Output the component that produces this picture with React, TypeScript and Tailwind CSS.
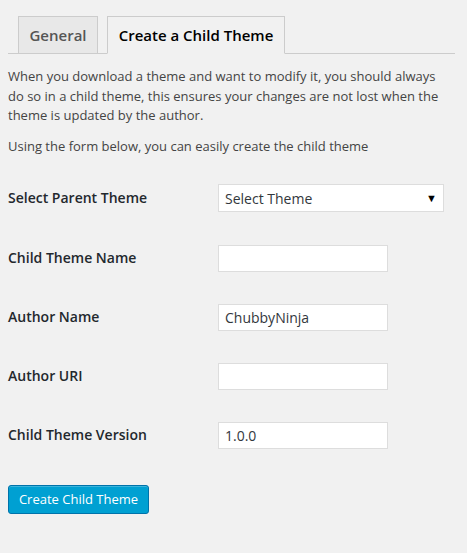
export default function App() {
  const rows = [
    { label: "Child Theme Name", value: "" },
    { label: "Author Name", value: "ChubbyNinja" },
    { label: "Author URI", value: "" },
    { label: "Child Theme Version", value: "1.0.0" },
  ];

  return (
    <div
      className="min-h-[553px] w-full bg-[#f1f1f1] pl-2 pr-3 pt-4 text-[13px] text-[#444]"
      style={{ fontFamily: '"Open Sans", sans-serif' }}
    >
      {/* Tabs */}
      <div className="flex border-b border-[#ccc] pl-[10px]">
        <div className="mr-[9px] -mb-px h-[38px] w-[80px] border border-[#ccc] bg-[#e8e8e8] text-center text-[15px] font-semibold leading-[36px] text-[#555]">
          General
        </div>
        <div className="-mb-px h-[38px] w-[178px] border border-[#ccc] border-b-[#f1f1f1] bg-[#f1f1f1] text-center text-[15px] font-semibold leading-[36px] text-black">
          Create a Child Theme
        </div>
      </div>

      <p className="mt-[13px] pr-[12px] leading-[19.5px]">
        When you download a theme and want to modify it, you should always do so in a child theme, this ensures your changes are not lost when the theme is updated by the author.
      </p>
      <p className="mt-[11px] leading-[19.5px]">
        Using the form below, you can easily create the child theme
      </p>

      {/* Form */}
      <div className="mt-[26px] flex flex-col">
        <div className="flex h-[31px] items-center">
          <div className="w-[210px] text-[14px] font-semibold text-[#23282d]">Select Parent Theme</div>
          <div className="flex h-[28px] w-[226px] items-center justify-between border border-[#ddd] bg-white pl-[6px] pr-[6px] pt-[2px] text-[14px] text-[#32373c]">
            <span>Select Theme</span>
            <span className="text-[11px] text-black">▼</span>
          </div>
        </div>
        {rows.map((r) => (
          <div key={r.label} className="mt-[32px] flex h-[27px] items-center">
            <div className="-mt-[2px] w-[210px] text-[14px] font-semibold text-[#23282d]">{r.label}</div>
            <div className="flex h-[27px] w-[170px] items-center border border-[#ddd] bg-white px-[6px] text-[14px] text-[#32373c]">
              {r.value}
            </div>
          </div>
        ))}
      </div>

      <button
        type="button"
        className="mt-[36px] h-[29px] w-[141px] rounded-[3px] border border-[#0073aa] bg-[#00a0d2] text-[13px] text-white shadow-[inset_0_1px_0_rgba(120,200,230,0.5)]"
      >
        Create Child Theme
      </button>
    </div>
  );
}
